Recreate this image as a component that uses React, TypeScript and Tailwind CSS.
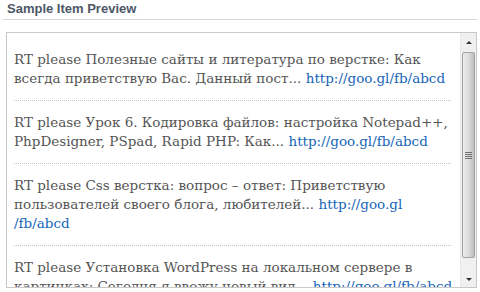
const items = [
  {
    lines: ['RT please Полезные сайты и литература по верстке: Как', 'всегда приветствую Вас. Данный пост...'],
    link: 'http://goo.gl/fb/abcd',
  },
  {
    lines: ['RT please Урок 6. Кодировка файлов: настройка Notepad++,', 'PhpDesigner, PSpad, Rapid PHP: Как...'],
    link: 'http://goo.gl/fb/abcd',
  },
  {
    lines: ['RT please Css верстка: вопрос – ответ: Приветствую', 'пользователей своего блога, любителей...'],
    link: 'http://goo.gl',
    tail: '/fb/abcd',
  },
  {
    lines: ['RT please Установка WordPress на локальном сервере в', 'картинках: Сегодня я ввожу новый вид...'],
    link: 'http://goo.gl/fb/abcd',
  },
];

function Item({ lines, link, tail }: { lines: string[]; link: string; tail?: string }) {
  return (
    <div className="pt-[12px] pb-[12px] border-b border-dotted border-[#c4c4c4] mr-[9px]">
      <div className="whitespace-nowrap">{lines[0]}</div>
      <div className="whitespace-nowrap">
        {lines[1]} <a className="text-[#1565b8]">{link}</a>
      </div>
      {tail && (
        <div className="whitespace-nowrap">
          <a className="text-[#1565b8]">{tail}</a>
        </div>
      )}
    </div>
  );
}

function Scrollbar() {
  return (
    <div className="w-[16px] flex flex-col bg-[#f0f0f0] border-l border-[#e8e8e8]">
      <div className="h-[18px] flex items-center justify-center">
        <div className="w-0 h-0 border-l-[3px] border-r-[3px] border-b-[3px] border-l-transparent border-r-transparent border-b-[#333]" />
      </div>
      <div className="h-[206px] mx-[1px] mt-[1px] rounded-[2px] border border-[#a3a3a3] bg-gradient-to-r from-[#ececec] via-[#dcdcdc] to-[#bdbdbd] flex items-center justify-center">
        <div className="flex flex-col gap-[1px]">
          <div className="w-[7px] h-[1px] bg-[#6f6f6f]" />
          <div className="w-[7px] h-[1px] bg-[#6f6f6f]" />
          <div className="w-[7px] h-[1px] bg-[#6f6f6f]" />
          <div className="w-[7px] h-[1px] bg-[#6f6f6f]" />
        </div>
      </div>
      <div className="flex-1" />
      <div className="h-[16px] flex items-center justify-center">
        <div className="w-0 h-0 border-l-[3px] border-r-[3px] border-t-[3px] border-l-transparent border-r-transparent border-t-[#333]" />
      </div>
    </div>
  );
}

export default function App() {
  return (
    <div className="w-[480px] h-[292px] bg-white overflow-hidden">
      <div className="mx-[3px] h-[20px] border-b border-[#d8d8d8] px-[4px] pt-[1px] font-['Liberation_Sans',Arial,sans-serif] font-bold text-[13px] leading-[16px] text-[#4c5866]">
        Sample Item Preview
      </div>
      <div className="ml-[6px] mt-[12px] w-[471px] h-[256px] border border-[#c8c8c8] flex">
        <div className="flex-1 overflow-hidden pl-[7px] pt-[5px] font-['DejaVu_Serif',Georgia,serif] text-[13.5px] leading-[19px] text-[#555]">
          {items.map((it, i) => (
            <Item key={i} {...it} />
          ))}
        </div>
        <Scrollbar />
      </div>
    </div>
  );
}
